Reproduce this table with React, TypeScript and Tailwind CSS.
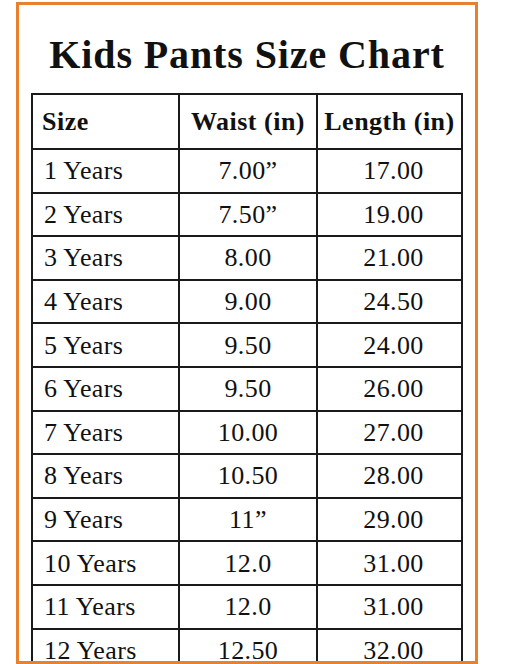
import React from "react";

const rows: [string, string, string][] = [
  ["1 Years", "7.00”", "17.00"],
  ["2 Years", "7.50”", "19.00"],
  ["3 Years", "8.00", "21.00"],
  ["4 Years", "9.00", "24.50"],
  ["5 Years", "9.50", "24.00"],
  ["6 Years", "9.50", "26.00"],
  ["7 Years", "10.00", "27.00"],
  ["8 Years", "10.50", "28.00"],
  ["9 Years", "11”", "29.00"],
  ["10 Years", "12.0", "31.00"],
  ["11 Years", "12.0", "31.00"],
  ["12 Years", "12.50", "32.00"],
];

export default function App() {
  return (
    <div className="w-[530px] h-[664px] bg-white overflow-hidden pt-[2px] pl-[16px]" style={{ fontFamily: '"Liberation Serif", serif' }}>
      <div className="w-[462px] h-[662px] border-[3px] border-[#e5812f] overflow-hidden px-[12px] pt-[24px] text-[#111]">
        <h1 className="text-center font-bold text-[40px] leading-[52px] h-[64px] tracking-[0.9px]">Kids Pants Size Chart</h1>
        <div className="w-[432px] border-2 border-[#1a1a1a]">
          <div className="grid grid-cols-[145px_138px_145px] h-[55px] border-b-2 border-[#1a1a1a] font-bold text-[26px] tracking-[0.5px]">
            <div className="flex items-center pl-[9px]">Size</div>
            <div className="flex items-center justify-center border-l-2 border-[#1a1a1a]">Waist (in)</div>
            <div className="flex items-center justify-center border-l-2 border-[#1a1a1a]">Length (in)</div>
          </div>
          {rows.map((r, i) => (
            <div key={i} className="grid grid-cols-[145px_138px_145px] h-[43.6px] border-b-2 border-[#1a1a1a] text-[26px] tracking-[0.4px]">
              <div className="flex items-center pl-[11px]">{r[0]}</div>
              <div className="flex items-center justify-center border-l-2 border-[#1a1a1a]">{r[1]}</div>
              <div className="flex items-center justify-center border-l-2 border-[#1a1a1a] pl-[8px]">{r[2]}</div>
            </div>
          ))}
        </div>
      </div>
    </div>
  );
}
